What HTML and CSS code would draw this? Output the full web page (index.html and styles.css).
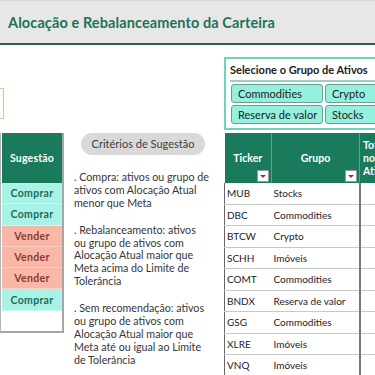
FILE: index.html
```html
<!DOCTYPE html>
<html lang="pt">
<head>
  <meta charset="UTF-8" />
  <title>Alocação e Rebalanceamento da Carteira</title>
  <link rel="stylesheet" href="styles.css">
</head>
<body>
  <header class="title-bar">
    <h1>Alocação e Rebalanceamento da Carteira</h1>
  </header>

  <main class="sheet">
    <div class="note-cell"><div class="note-box"></div></div>
    <div></div>

    <div class="slicer">
      <div class="slicer-title">Selecione o Grupo de Ativos</div>
      <div class="slicer-items">
        <button class="slicer-item">Commodities</button>
        <button class="slicer-item">Crypto</button>
        <button class="slicer-item">Reserva de valor</button>
        <button class="slicer-item">Stocks</button>
      </div>
    </div>

    <section class="suggest">
      <div class="suggest-head">Sugestão</div>
      <div class="suggest-row buy">Comprar</div>
      <div class="suggest-row buy">Comprar</div>
      <div class="suggest-row sell">Vender</div>
      <div class="suggest-row sell">Vender</div>
      <div class="suggest-row sell">Vender</div>
      <div class="suggest-row buy">Comprar</div>
    </section>

    <section class="criteria">
      <div class="criteria-pill">Critérios de Sugestão</div>
      <div class="criteria-text">
        <p>. Compra: ativos ou grupo de ativos com Alocação Atual menor que Meta</p>
        <p>. Rebalanceamento: ativos ou grupo de ativos com Alocação Atual maior que Meta acima do Limite de Tolerância</p>
        <p>. Sem recomendação: ativos ou grupo de ativos com Alocação Atual maior que Meta até ou igual ao Limite de Tolerância</p>
      </div>
    </section>

    <section class="assets">
      <table class="asset-table">
        <colgroup>
          <col class="col-ticker">
          <col class="col-group">
          <col class="col-total">
        </colgroup>
        <thead>
          <tr>
            <th>Ticker<span class="filter-btn"></span></th>
            <th>Grupo<span class="filter-btn"></span></th>
            <th class="th-total">Total<br>no<br>Ativo</th>
          </tr>
        </thead>
        <tbody id="asset-rows"></tbody>
      </table>
    </section>
  </main>

  <script>
    const assets = [
      ["MUB", "Stocks"],
      ["DBC", "Commodities"],
      ["BTCW", "Crypto"],
      ["SCHH", "Imóveis"],
      ["COMT", "Commodities"],
      ["BNDX", "Reserva de valor"],
      ["GSG", "Commodities"],
      ["XLRE", "Imóveis"],
      ["VNQ", "Imóveis"]
    ];

    const rows = document.getElementById("asset-rows");
    assets.forEach(([ticker, group]) => {
      const tr = document.createElement("tr");
      tr.innerHTML = `<td>${ticker}</td><td>${group}</td><td></td>`;
      rows.appendChild(tr);
    });
  </script>
</body>
</html>
```

FILE: styles.css
```css
html, body {
  margin: 0;
  padding: 0;
  width: 375px;
  height: 375px;
  overflow: hidden;
  background: #fff;
  font-family: Lato, "Open Sans", sans-serif;
  color: #333;
}
.title-bar {
  background: #e7e7e7;
  border-top: 1px solid #d6d6d6;
  border-bottom: 2px solid #2f5d50;
  box-sizing: border-box;
  height: 45px;
  display: flex;
  align-items: center;
  padding-left: 8px;
}
.title-bar h1 {
  margin: 0;
  font-size: 14.5px;
  font-weight: 700;
  color: #1d7357;
  letter-spacing: 0.1px;
}
.sheet {
  display: grid;
  grid-template-columns: 64px 160px 1fr;
  grid-template-rows: 88px 242px;
}
.note-cell {
  padding-top: 43px;
}
.note-box {
  width: 3px;
  height: 29px;
  border: 1px solid #cfc6a2;
  border-left: none;
  background: #fdfcf5;
}

/* slicer */
.slicer {
  margin-top: 12px;
  width: 170px;
  height: 73px;
  box-sizing: border-box;
  border: 2px solid #6fd3bf;
  border-right: none;
  padding-left: 5px;
}
.slicer-title {
  height: 21px;
  line-height: 21px;
  font-size: 11px;
  font-weight: 700;
  color: #222;
  margin-left: -1px;
  border-bottom: 2px solid #9ccfc3;
}
.slicer-items {
  display: grid;
  grid-template-columns: 92px 92px;
  grid-auto-rows: 19px;
  gap: 2px;
  margin-top: 2px;
}
.slicer-item {
  font-family: Lato, sans-serif;
  font-size: 11px;
  color: #222;
  text-align: left;
  padding: 0 0 0 6px;
  background: #93f1dd;
  border: 1px solid #6e9c91;
  border-radius: 3px;
}

/* suggestion column */
.suggest {
  height: 200px;
  box-sizing: border-box;
  border-left: 1px solid #b5b5b5;
  border-right: 2px solid #a6a6a6;
  border-bottom: 2px solid #a6a6a6;
  padding-left: 1px;
}
.suggest-head {
  height: 50px;
  background: #1a7a5c;
  color: #fff;
  font-size: 10.5px;
  font-weight: 700;
  display: flex;
  align-items: center;
  justify-content: center;
  letter-spacing: 0.2px;
}
.suggest-row {
  height: 21.3px;
  box-sizing: border-box;
  display: flex;
  align-items: center;
  justify-content: center;
  font-size: 10.5px;
  font-weight: 700;
  letter-spacing: 0.3px;
}
.suggest-row.buy {
  background: #a9f3e6;
  color: #1e6b5b;
  border-bottom: 1px solid #cdf8f0;
}
.suggest-row.sell {
  background: #f9b7a7;
  color: #8a3b2e;
  border-bottom: 1px solid #fbcfc3;
}

/* criteria notes */
.criteria-pill {
  margin-left: 17px;
  width: 124px;
  height: 22px;
  line-height: 22px;
  border-radius: 11px;
  background: #d9d9d9;
  text-align: center;
  font-size: 11px;
  color: #404040;
}
.criteria-text {
  width: 135px;
  margin-top: 16px;
  padding-left: 10px;
  font-size: 10.7px;
  line-height: 12.8px;
  color: #363636;
}
.criteria-text p {
  margin: 0 0 14.5px;
}

/* assets table */
.asset-table {
  table-layout: fixed;
  width: 175px;
  border-collapse: collapse;
  font-size: 10px;
  color: #222;
}
.col-ticker { width: 47px; }
.col-group { width: 88px; }
.col-total { width: 40px; }
.asset-table th {
  position: relative;
  height: 50px;
  padding: 0;
  background: #1a7a5c;
  color: #fff;
  font-size: 10.5px;
  font-weight: 700;
  border-right: 1px solid #55a68b;
}
.asset-table th.th-total {
  text-align: left;
  padding-left: 3px;
  line-height: 13px;
}
.filter-btn {
  position: absolute;
  right: 2px;
  bottom: 1px;
  width: 10px;
  height: 10px;
  background: #fff;
  border: 1px solid #9a9a9a;
}
.filter-btn::after {
  content: "";
  position: absolute;
  left: 2px;
  top: 4px;
  border-left: 3px solid transparent;
  border-right: 3px solid transparent;
  border-top: 3px solid #555;
}
.asset-table td {
  height: 20.5px;
  padding: 0 0 0 2px;
  border-bottom: 1px solid #c8c8c8;
  white-space: nowrap;
}
.asset-table td:first-child {
  border-left: 1px solid #666;
}
.asset-table td:nth-child(2) {
  border-right: 2px solid #777;
}
```
